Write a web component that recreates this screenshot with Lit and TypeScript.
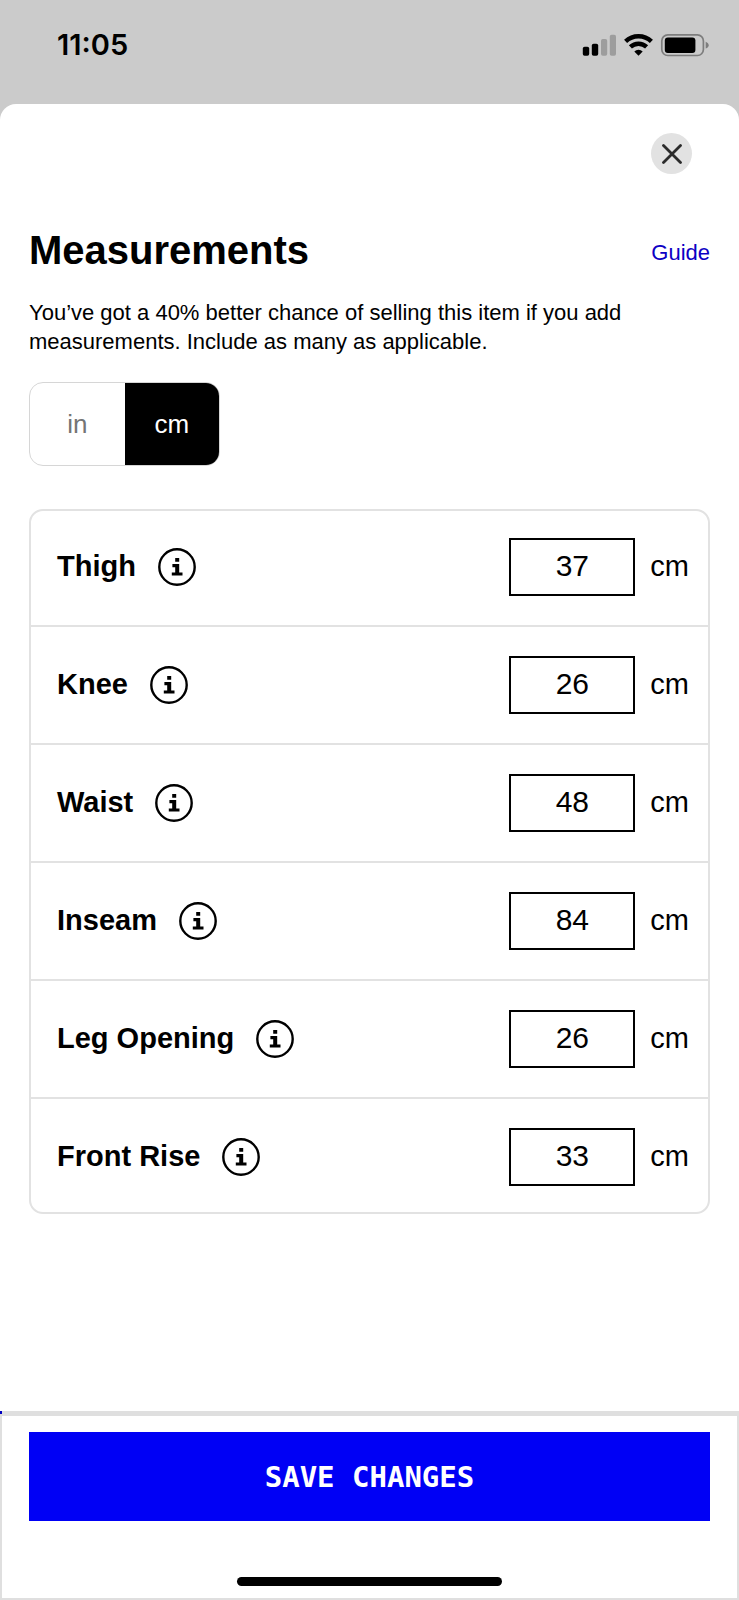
import { LitElement, html, css, svg } from "lit";
import { customElement, state } from "lit/decorators.js";
import { classMap } from "lit/directives/class-map.js";

interface Measurement {
  id: string;
  label: string;
  value: number;
}

const infoIcon = svg`
  <svg class="info-icon" viewBox="0 0 38 38" aria-hidden="true">
    <circle cx="19" cy="19" r="17.7" fill="none" stroke="#000" stroke-width="2.4" />
    <path d="M17.2 10h4v3.8h-4z M14.4 16h6.8v8.4h3.3v3.2H13.8v-3.2h3.4v-5.2h-2.8z" />
  </svg>`;

@customElement("app-root")
export class AppRoot extends LitElement {
  @state() private unit = "cm";

  private units = ["in", "cm"];

  private measurements: Measurement[] = [
    { id: "thigh", label: "Thigh", value: 37 },
    { id: "knee", label: "Knee", value: 26 },
    { id: "waist", label: "Waist", value: 48 },
    { id: "inseam", label: "Inseam", value: 84 },
    { id: "leg-opening", label: "Leg Opening", value: 26 },
    { id: "front-rise", label: "Front Rise", value: 33 },
  ];

  static styles = css`
    :host {
      display: flex;
      flex-direction: column;
      min-height: 100vh;
      background: #cbcbcb;
      color: #000;
      font-family: "Liberation Sans", Arial, sans-serif;
    }
    * {
      box-sizing: border-box;
    }
    button {
      font: inherit;
      color: inherit;
      border: 0;
      padding: 0;
      margin: 0;
      background: none;
      cursor: pointer;
    }
    .status {
      display: flex;
      justify-content: space-between;
      align-items: center;
      padding: 28px 30px 43px 57px;
    }
    .time {
      font: 600 29px/33px Inter, sans-serif;
    }
    .status-icons {
      display: block;
      width: 127px;
      height: 24px;
    }
    .sheet {
      flex: 1;
      display: flex;
      flex-direction: column;
      background: #fff;
      border-radius: 16px 16px 0 0;
      overflow: hidden;
    }
    .content {
      flex: 1;
      display: flex;
      flex-direction: column;
      padding: 29px 29px 40px;
    }
    .close {
      align-self: flex-end;
      display: grid;
      place-items: center;
      width: 41px;
      height: 41px;
      margin-right: 18px;
      border-radius: 50%;
      background: #e2e2e2;
    }
    .close svg {
      width: 20px;
      height: 20px;
    }
    .heading {
      display: flex;
      justify-content: space-between;
      align-items: flex-end;
      margin-top: 53px;
    }
    h1 {
      margin: 0;
      font-size: 40px;
      line-height: 46px;
      font-weight: 700;
    }
    .guide {
      font-size: 22px;
      line-height: 40px;
      color: #0d00c4;
      text-decoration: none;
    }
    .intro {
      margin: 25px 0 0;
      font-size: 22px;
      line-height: 29px;
    }
    .units {
      display: flex;
      align-self: flex-start;
      width: 191px;
      margin-top: 26px;
      border: 1px solid #d6d6d6;
      border-radius: 14px;
      overflow: hidden;
    }
    .unit {
      flex: 1;
      height: 82px;
      font-size: 26px;
      color: #757575;
    }
    .unit.selected {
      background: #000;
      color: #fff;
    }
    .card {
      margin-top: 43px;
      border: 2px solid #e2e2e2;
      border-radius: 14px;
    }
    .row {
      display: flex;
      align-items: center;
      padding: 29px 19px 29px 26px;
    }
    .row:first-child {
      padding-top: 27px;
    }
    .row:last-child {
      padding-bottom: 26px;
    }
    .row + .row {
      border-top: 2px solid #e2e2e2;
    }
    .label,
    .suffix {
      padding-bottom: 2px;
      font-size: 29px;
      line-height: 34px;
    }
    .label {
      font-weight: 700;
    }
    .info {
      margin: 0 auto 0 22px;
    }
    .info-icon {
      display: block;
      width: 38px;
      height: 38px;
    }
    .value {
      width: 126px;
      height: 58px;
      margin: 0 15px;
      padding: 0 0 2px;
      border: 2px solid #000;
      border-radius: 0;
      background: #fff;
      color: #000;
      font: inherit;
      font-size: 30px;
      text-align: center;
    }
    .progress {
      height: 3px;
      background: #dfdfdf;
    }
    .progress-fill {
      width: 2px;
      height: 100%;
      background: #0000c0;
    }
    footer {
      display: flex;
      flex-direction: column;
      align-items: center;
      padding: 16px 27px 12px;
      border: 2px solid #dfdfdf;
    }
    .save {
      align-self: stretch;
      height: 89px;
      background: #0000f5;
      color: #fff;
      font: 700 29px/34px "DejaVu Sans Mono", monospace;
    }
    .home {
      width: 39%;
      height: 9px;
      margin-top: 56px;
      border-radius: 5px;
      background: #000;
    }
  `;

  private renderRow(m: Measurement) {
    return html`
      <div class="row">
        <label class="label" for=${m.id}>${m.label}</label>
        <button class="info" aria-label="About ${m.label}">${infoIcon}</button>
        <input class="value" id=${m.id} type="text" inputmode="decimal" .value=${String(m.value)} />
        <span class="suffix">${this.unit}</span>
      </div>
    `;
  }

  render() {
    return html`
      <div class="status">
        <span class="time">11:05</span>
        <svg class="status-icons" viewBox="0 0 127 24" aria-hidden="true">
          <rect x="0.8" y="13.8" width="6.4" height="9" rx="1.8" />
          <rect x="9.8" y="10.8" width="6.4" height="12" rx="1.8" />
          <g fill="#9d9d9d">
            <rect x="19" y="6" width="6.2" height="16.8" rx="1.8" />
            <rect x="27.8" y="1.8" width="6.2" height="21" rx="1.8" />
          </g>
          <g fill="none" stroke="#000" stroke-width="4.4">
            <path d="M43.6 8.4a18.6 18.6 0 0 1 25.8 0" />
            <path d="M48.4 13.9a11.8 11.8 0 0 1 16.2 0" />
          </g>
          <path d="M52.3 18.4a6.3 6.3 0 0 1 8.4 0l-4.2 4.3z" />
          <rect x="79.8" y="1.9" width="41.6" height="20.6" rx="6" fill="none" stroke="#7d7d7d" stroke-width="1.7" />
          <rect x="82.8" y="4.5" width="30.6" height="15.5" rx="3" />
          <path d="M123.7 8.8c1.9.8 3 2 3 3.4s-1.1 2.6-3 3.4z" fill="#7d7d7d" />
        </svg>
      </div>
      <main class="sheet">
        <div class="content">
          <button class="close" aria-label="Close">
            <svg viewBox="0 0 20 20" aria-hidden="true">
              <path d="M1.5 1.5l17 17M18.5 1.5l-17 17" fill="none" stroke="#2b2b2b" stroke-width="2.8" stroke-linecap="round" />
            </svg>
          </button>
          <div class="heading">
            <h1>Measurements</h1>
            <a class="guide" href="#guide">Guide</a>
          </div>
          <p class="intro">
            You’ve got a 40% better chance of selling this item if you add
            measurements. Include as many as applicable.
          </p>
          <div class="units" role="group" aria-label="Unit">
            ${this.units.map(
              (u) => html`<button
                class=${classMap({ unit: true, selected: u === this.unit })}
                aria-pressed=${u === this.unit ? "true" : "false"}
                @click=${() => (this.unit = u)}
              >${u}</button>`
            )}
          </div>
          <div class="card">${this.measurements.map((m) => this.renderRow(m))}</div>
        </div>
        <div class="progress"><div class="progress-fill"></div></div>
        <footer>
          <button class="save">SAVE CHANGES</button>
          <div class="home"></div>
        </footer>
      </main>
    `;
  }
}
